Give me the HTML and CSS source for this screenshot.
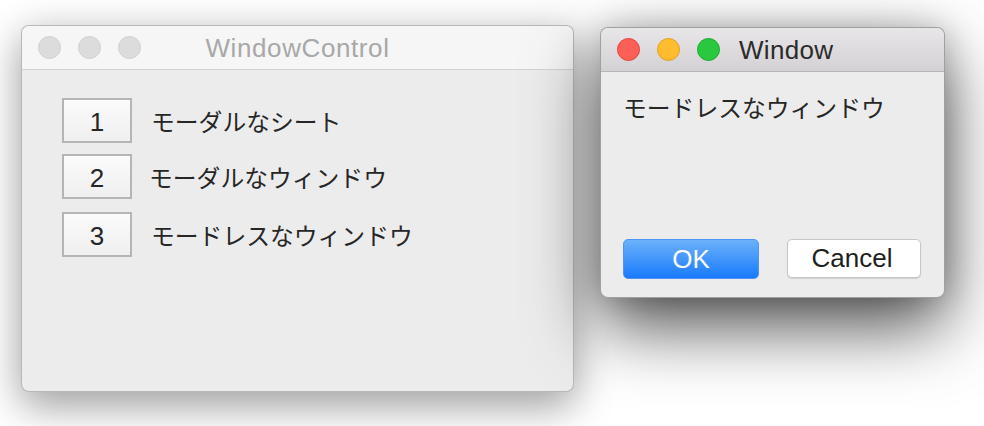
FILE: index.html
```html
<!DOCTYPE html>
<html lang="ja">
<head>
<meta charset="utf-8">
<title>WindowControl</title>
<link rel="stylesheet" href="styles.css">
</head>
<body>
<div class="desktop">
  <div class="window window-main">
    <div class="titlebar titlebar-inactive">
      <div class="lights">
        <span class="light light-off"></span>
        <span class="light light-off"></span>
        <span class="light light-off"></span>
      </div>
      <div class="title title-inactive">WindowControl</div>
      <div></div>
    </div>
    <div class="main-body">
      <div class="row">
        <div class="num-box">1</div>
        <div class="label">モーダルなシート</div>
      </div>
      <div class="row">
        <div class="num-box">2</div>
        <div class="label label-tight">モーダルなウィンドウ</div>
      </div>
      <div class="row row-last">
        <div class="num-box">3</div>
        <div class="label">モードレスなウィンドウ</div>
      </div>
    </div>
  </div>

  <div class="window window-dialog">
    <div class="titlebar titlebar-active">
      <div class="lights">
        <span class="light light-red"></span>
        <span class="light light-yellow"></span>
        <span class="light light-green"></span>
      </div>
      <div class="title title-active">Window</div>
    </div>
    <div class="dialog-body">
      <div class="message">モードレスなウィンドウ</div>
      <div class="buttons">
        <button class="btn btn-primary">OK</button>
        <button class="btn btn-secondary">Cancel</button>
      </div>
    </div>
  </div>
</div>
</body>
</html>
```
FILE: styles.css
```css
html, body {
  margin: 0;
  padding: 0;
}
body {
  width: 984px;
  height: 426px;
  overflow: hidden;
  background: #ffffff;
  font-family: "Liberation Sans", "Noto Sans CJK JP", sans-serif;
  color: #262626;
}
.desktop {
  display: flex;
  align-items: flex-start;
  gap: 26px;
  padding: 25px 0 0 21px;
}
.window {
  box-sizing: border-box;
  border: 1px solid rgba(0, 0, 0, 0.22);
  border-radius: 8px;
  background: #ececec;
  overflow: hidden;
  display: flex;
  flex-direction: column;
}
.window-main {
  width: 553px;
  height: 367px;
  box-shadow: 0 16px 40px rgba(0, 0, 0, 0.32), 0 0 40px rgba(0, 0, 0, 0.1);
}
.window-dialog {
  width: 345px;
  height: 271px;
  margin-top: 2px;
  border-color: rgba(0, 0, 0, 0.32);
  box-shadow: 0 28px 70px rgba(0, 0, 0, 0.7), 0 0 30px rgba(0, 0, 0, 0.18);
}
.titlebar {
  height: 43px;
  flex: none;
  box-sizing: content-box;
  display: grid;
  align-items: center;
}
.titlebar-inactive {
  grid-template-columns: 1fr auto 1fr;
  background: #f6f6f6;
  border-bottom: 1px solid #d3d3d3;
}
.titlebar-active {
  display: flex;
  background: linear-gradient(#e8e6e8, #d3d1d3);
  border-bottom: 1px solid #b8b6b8;
}
.lights {
  display: flex;
  gap: 17px;
  padding-left: 16px;
}
.light {
  width: 23px;
  height: 23px;
  box-sizing: border-box;
  border-radius: 50%;
  display: block;
}
.light-off {
  background: #dcdcdc;
  border: 1px solid #d0d0d0;
}
.light-red {
  background: #fe5f57;
  border: 1px solid #e2463f;
}
.light-yellow {
  background: #febc2e;
  border: 1px solid #dea123;
}
.light-green {
  background: #2ac840;
  border: 1px solid #1dab2b;
}
.title {
  font-size: 26px;
  line-height: 30px;
  white-space: nowrap;
}
.title-inactive {
  color: #a8a8a8;
  letter-spacing: 0.6px;
}
.title-active {
  color: #2b2b2b;
  margin-left: 19px;
  letter-spacing: 0.3px;
}
.main-body {
  padding: 28px 0 0 40px;
  display: flex;
  flex-direction: column;
  gap: 11px;
}
.row {
  display: flex;
  align-items: center;
  gap: 19px;
}
.row-last {
  margin-top: 2px;
}
.num-box {
  width: 70px;
  height: 45px;
  box-sizing: border-box;
  border: 2px solid #b5b5b5;
  background: linear-gradient(#fbfbfb, #efefef);
  display: flex;
  align-items: center;
  justify-content: center;
  font-size: 26px;
  color: #262626;
  padding-top: 3px;
}
.label {
  font-family: "Noto Sans CJK JP", sans-serif;
  font-size: 23.8px;
  line-height: 30px;
  color: #262626;
}
.label-tight {
  margin-left: -2px;
}
.dialog-body {
  flex: 1;
  display: flex;
  flex-direction: column;
  justify-content: space-between;
  padding: 20px 23px 18px 22px;
}
.message {
  font-family: "Noto Sans CJK JP", sans-serif;
  font-size: 23.8px;
  line-height: 30px;
  color: #262626;
}
.buttons {
  display: flex;
  justify-content: space-between;
  align-items: flex-start;
}
.btn {
  font-family: "Liberation Sans", sans-serif;
  font-size: 26px;
  border-radius: 5px;
  padding: 0;
  margin: 0;
  box-sizing: border-box;
  display: flex;
  align-items: center;
  justify-content: center;
}
.btn-primary {
  width: 136px;
  height: 40px;
  color: #ffffff;
  background: linear-gradient(#6cb1fa, #197bfd);
  border: 1px solid #4e94f5;
}
.btn-secondary {
  width: 134px;
  height: 39px;
  color: #1e1e1e;
  background: #ffffff;
  border: 1px solid #c6c6c6;
  box-shadow: 0 1px 1px rgba(0, 0, 0, 0.12);
  padding-right: 4px;
}
```
